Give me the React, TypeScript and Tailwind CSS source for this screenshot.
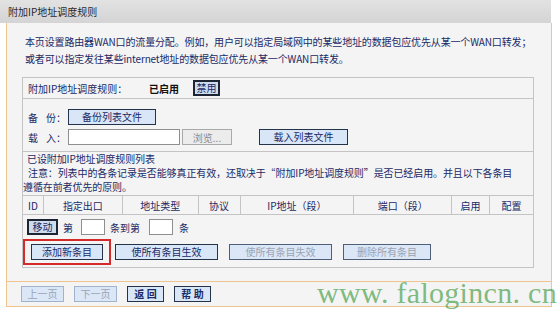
import React from 'react';

const font = { fontFamily: '"Noto Sans CJK SC", "Liberation Sans", sans-serif' };

function Btn({
  children,
  className = '',
  disabled = false,
  pressed = false,
}: {
  children: React.ReactNode;
  className?: string;
  disabled?: boolean;
  pressed?: boolean;
}) {
  const tone = pressed
    ? 'bg-[#cfdcee] border-2 border-[#1d2433] text-[#1b2a66]'
    : disabled
    ? 'bg-[#dbe7f7] border border-[#4e5f7a] text-[#9aa3b3]'
    : 'bg-[#d9e6f8] border border-[#24324a] text-[#1b2a66]';
  return (
    <div className={`flex h-[16px] items-center justify-center text-[10px] leading-none ${tone} ${className}`}>
      {children}
    </div>
  );
}

function Input({ className = '' }: { className?: string }) {
  return <div className={`h-[16px] border border-[#8f8f8f] bg-white ${className}`} />;
}

function Label({ a, b }: { a: string; b: string }) {
  return (
    <span className="flex w-[40px]">
      <span>{a}</span>
      <span className="ml-[8px]">{b}：</span>
    </span>
  );
}

const cols: [string, number][] = [
  ['ID', 21],
  ['指定出口', 79],
  ['地址类型', 76],
  ['协议', 42],
  ['IP地址（段）', 114],
  ['端口（段）', 98],
  ['启用', 38],
  ['配置', 43],
];

export default function App() {
  return (
    <div className="relative h-[312px] w-[557px] overflow-hidden bg-white text-[10px] text-[#1b2a66]" style={font}>
      <div className="flex h-[23px] w-[551px] items-center bg-gradient-to-b from-[#e2e2e2] to-[#d4d4d4] pl-[8px] text-[10px] text-[#2a2a2a]">
        附加IP地址调度规则
      </div>

      <div className="ml-[6px] w-[546px] border-x border-b border-[#f0c48f] bg-[#f4f4f4]">
        <div className="whitespace-nowrap px-[18px] pt-[10px] leading-[17px] tracking-[-0.15px]">
          <div>本页设置路由器WAN口的流量分配。例如，用户可以指定局域网中的某些地址的数据包应优先从某一个WAN口转发；</div>
          <div>或者可以指定发往某些internet地址的数据包应优先从某一个WAN口转发。</div>
        </div>

        <div className="mx-[15px] mt-[10px] w-[512px] border border-[#c4c4c4]">
          <div className="flex h-[21px] items-center border-b border-[#c4c4c4] pl-[5px]">
            <span className="w-[121px]">附加IP地址调度规则：</span>
            <span className="w-[44px] font-bold text-[#111]">已启用</span>
            <Btn pressed className="w-[27px]">禁用</Btn>
          </div>

          <div className="flex flex-col gap-[4px] border-b border-[#c4c4c4] pb-[6px] pl-[5px] pt-[10px]">
            <div className="flex items-center">
              <Label a="备" b="份" />
              <Btn className="w-[88px]">备份列表文件</Btn>
            </div>
            <div className="flex items-center">
              <Label a="载" b="入" />
              <Input className="w-[112px]" />
              <div className="ml-[2px] flex h-[16px] w-[50px] items-center justify-center border border-[#a9a9a9] bg-[#ececec] text-[#8a8a8a]">
                浏览...
              </div>
              <Btn className="ml-[27px] w-[89px]">载入列表文件</Btn>
            </div>
          </div>

          <div className="whitespace-nowrap pl-[3px] leading-[14px] tracking-[-0.1px]">
            <div className="pl-[1px]">已设附加IP地址调度规则列表</div>
            <div className="pl-[2px]">注意：列表中的各条记录是否能够真正有效，还取决于“附加IP地址调度规则”是否已经启用。并且以下各条目</div>
            <div className="-ml-[3px]">遵循在前者优先的原则。</div>
          </div>

          <div className="mt-[1px] flex h-[20px] border-y border-[#c4c4c4]">
            {cols.map(([t, w], i) => (
              <div
                key={t}
                className={`flex items-center justify-center ${i < cols.length - 1 ? 'border-r border-[#c4c4c4]' : ''}`}
                style={{ width: w }}
              >
                {t}
              </div>
            ))}
          </div>

          <div className="flex items-center pl-[4px] pt-[4px]">
            <Btn pressed className="w-[31px]">移动</Btn>
            <span className="ml-[5px]">第</span>
            <Input className="ml-[8px] w-[24px]" />
            <span className="ml-[5px]">条到第</span>
            <Input className="ml-[9px] w-[24px]" />
            <span className="ml-[6px]">条</span>
          </div>

          <div className="flex items-center pb-[2px] pt-[4px]">
            <div className="border-2 border-[#d42a2a] px-[6px] py-[3px]">
              <Btn className="w-[72px]">添加新条目</Btn>
            </div>
            <Btn className="ml-[4px] w-[103px]">使所有条目生效</Btn>
            <Btn disabled className="ml-[11px] w-[103px]">使所有条目失效</Btn>
            <Btn disabled className="ml-[11px] w-[88px]">删除所有条目</Btn>
          </div>
        </div>

        <div className="h-[14px] border-b border-[#f0c48f]" />

        <div className="flex h-[24px] items-center gap-[10px] pl-[14px]">
          <Btn disabled className="w-[43px] border-[#9fb3cc]">上一页</Btn>
          <Btn disabled className="w-[43px] border-[#9fb3cc]">下一页</Btn>
          <Btn className="w-[37px] font-bold">返 回</Btn>
          <Btn className="w-[37px] font-bold">帮 助</Btn>
        </div>
      </div>

      <div
        className="absolute bottom-[4px] right-0 whitespace-nowrap text-[30px] leading-none tracking-[0.3px] text-[#4aa04a]/70"
        style={{ fontFamily: '"Liberation Serif", serif' }}
      >
        www. falogincn. cn
      </div>
    </div>
  );
}
